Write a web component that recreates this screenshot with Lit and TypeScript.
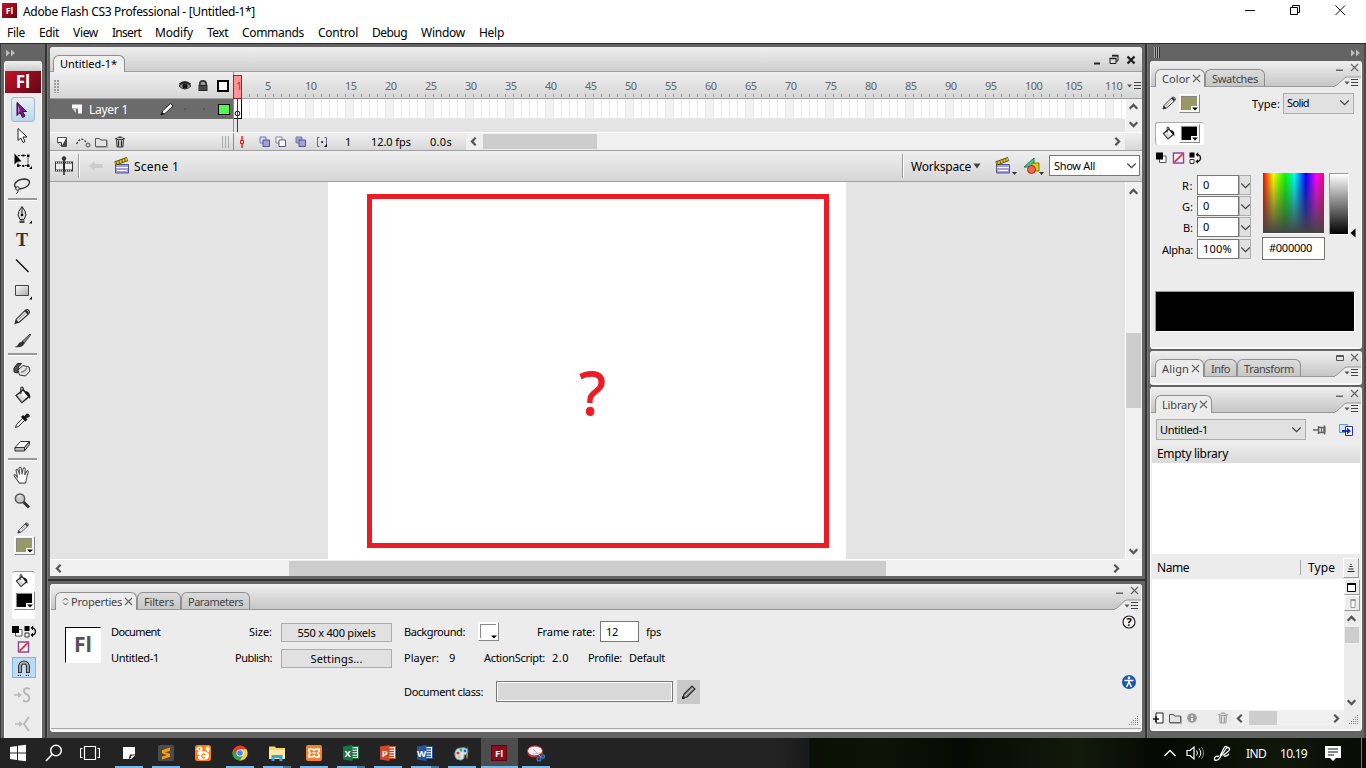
import { LitElement, html, svg, css, TemplateResult } from "lit";
import { customElement, property } from "lit/decorators.js";
import { classMap } from "lit/directives/class-map.js";

/** Label whose tracking is adjusted so that the text fills a given width. */
@customElement("ui-label")
class UiLabel extends LitElement {
  @property({ type: Number }) w = 0;
  @property() text = "";
  static styles = css`
    :host { display: inline-block; white-space: pre; flex: none; }
    span { display: inline-block; }
  `;
  render() { return html`<span>${this.text}</span>`; }
  updated() {
    const span = this.renderRoot.querySelector("span") as HTMLElement;
    span.style.letterSpacing = "0";
    const natural = span.getBoundingClientRect().width;
    span.style.letterSpacing = `${(this.w - natural) / this.text.length}px`;
    this.style.width = `${this.w}px`;
  }
}

const L = (text: string, w: number, cls = "") => html`<ui-label class=${cls} .text=${text} .w=${w}></ui-label>`;
/** SVG box with its origin in the centre. */
const ic = (w: number, h: number, body: unknown) =>
  html`<svg class="ic" width=${w} height=${h} viewBox="${-w / 2} ${-h / 2} ${w} ${h}">${body}</svg>`;

const chev = (dir: "u" | "d" | "l" | "r") => {
  const r = { u: 0, r: 90, d: 180, l: 270 }[dir];
  return ic(15, 15, svg`<path d="M-3.8 2.2 0 -1.6 3.8 2.2" transform="rotate(${r})" fill="none" stroke="#555" stroke-width="2.2"/>`);
};
const thinChev = (c = "#444") => ic(11, 9, svg`<path d="M-4.2 -2 0 2.2 4.2 -2" fill="none" stroke=${c} stroke-width="1.2"/>`);
const corner = svg`<path d="M0 0h3v-3z" fill="#000"/>`;

const pencil = svg`<path d="M-6 6 -5 2.5 3 -5.5q1.5-1 2.8.3t0 2.8L-2.5 5z" fill="#fff" stroke="#333"/><path d="M-6 6 -5 2.5 -2.5 5zM2 -4.5 5 -1.6 6 -3.5 3.5 -6z" fill="#333"/><path d="M-3 3 3 -3" stroke="#999"/>`;
const bucket = svg`<path d="M-5 0 1 -5 6 1 0 6z" fill="#f4f4f4" stroke="#222" stroke-width="1.3"/><path d="M-1 -7v6M-1 -7q2-1.500 2.500 3" fill="none" stroke="#222"/><path d="M2 -4q6 0 5 7l-2-3z" fill="#111"/><path d="M-5 0h5l3 3-3 3z" fill="#bbb" opacity=".5"/>`;
const smallPage = svg`<path d="M-4.500 -4.500h9v9h-5l-4-4z" fill="#fff" stroke="#555"/><path d="M4.500 -4.500v9h-5z" fill="#444"/><path d="M-4.500 .5h4v4" fill="#ddd" stroke="#333"/>`;
const folder = svg`<path d="M-5.500 4.500v-8h4l1 1.500h6v6.500z" fill="#e4e4e4" stroke="#555"/><path d="M-5 5.300h11.300v-7" fill="none" stroke="#999"/>`;
const trash = svg`<path d="M-3.500 -2.500h7l-.6 7.500h-5.800z" fill="#ccc" stroke="#333"/><path d="M-5 -3q5-3 10 0M-1.500 -5h3M-1.500 -1.500v6M1.500 -1.500v6" fill="none" stroke="#333" stroke-width="1.200"/>`;
const clapper = svg`<path d="M-6.500 -1.500h13v8.500h-13z" fill="#a3a1dc" stroke="#55539a"/><path d="M-6 1.500h12M-5 4.500h10" stroke="#fff" stroke-width="1.200"/><path d="M-7 -2.500 5.500 -7" stroke="#4c4708" stroke-width="4"/><path d="M-6.500 -2.700 5.200 -6.900" stroke="#e6cf2a" stroke-width="2.400"/><path d="M-6 -2.900 5 -6.900" stroke="#7a6b04" stroke-width="2.400" stroke-dasharray="1 2"/>`;
const noneIcon = svg`<path d="M-5 -5h10v10h-10z" fill="#fff" stroke="#93409e" stroke-width="1.500"/><path d="M-4 4 4 -4" stroke="#f0343c" stroke-width="1.800"/>`;
const bwIcon = svg`<path d="M-2 -2h6.500v6.500h-6.500z" fill="#fff" stroke="#555"/><path d="M-5.500 -5.500h7v7h-7z" fill="#000"/>`;
const swapIcon = svg`<path d="M-6 -5.500h5v5h-5z"/><path d="M-5.500 1.500h4v4h-4z" fill="#fff" stroke="#333"/><path d="M1 -3.500h1.500q2.500 1 2.500 3.500t-2.500 3.500h-1" fill="none" stroke="#111" stroke-width="1.300"/><path d="M.2 -3.500 2.700 -6v5zM0 3.500 2.500 1.200v4.600z"/>`;
const menuGlyph = ic(16, 10, svg`<path d="M-7 -1.500h5l-2.500 3z" fill="#555"/><path d="M0 -3.500h7M0 -.5h7M0 2.500h7" stroke="#444"/>`);
const flIcon = (s: number, fs: number) => html`<svg class="ic" width=${s} height=${s} viewBox="0 0 16 16"><defs><linearGradient id="fl" x1="0" y1="0" x2="1" y2="1"><stop offset="0" stop-color="#c41228"/><stop offset="1" stop-color="#5e0713"/></linearGradient></defs><rect width="16" height="16" fill="url(#fl)"/><text class="flt" x="8" y="11.500" font-size=${fs} text-anchor="middle">Fl</text></svg>`;
const swatch = (cls: string) => html`<span class="sw ${cls}"><span class="swc"></span><svg class="swm" width="8" height="6" viewBox="0 0 8 6"><path d="M0 0h8v6H0z" fill="#fff"/><path d="M1 1.500h6l-3 3z"/></svg></span>`;
const cross = ic(9, 9, svg`<path d="M-3.500 -3.500 3.500 3.500M3.500 -3.500 -3.500 3.500" stroke="#666" stroke-width="1.200"/>`);

interface Tool { h: number; cls?: string; body?: unknown; mark?: boolean }
const toolset: Tool[] = [
  { h: 25, cls: "sel", body: svg`<path d="M-4 -7v13l3-3 2.500 5 2.500-1.500-2.500-4.500h4z" fill="#7b1c8f" stroke="#2b0838"/><path d="M-3 -4v8l2-3z" fill="#c870da"/>` },
  { h: 26, body: svg`<path d="M-4 -6.500v12l2.800-2.500 2.200 4.500 2-1-2-4.500h4z" fill="#fff" stroke="#222"/>` },
  { h: 25, mark: true, body: svg`<path d="M-4 -5h10v10h-10z" fill="none" stroke="#222" stroke-dasharray="2 1"/><path d="M-7.500 -7v11l3-3h4z"/><path d="M5 -6h2.500v2.500h-2.500zM5 4h2.500v2.500h-2.500zM-5 4h2.500v2.500h-2.500zM.3 -6h2v2h-2zM.3 4.500h2v2h-2z"/>` },
  { h: 25, body: svg`<path d="M-3 3.500q-6-2-4-5.500 3-4.500 10-4.500 6 1 4 5t-10 5" fill="none" stroke="#333" stroke-width="1.500"/><circle cx="-4.500" cy="3" r="1.800" fill="#ddd" stroke="#333"/><path d="M-4 5q1 2-2 3" fill="none" stroke="#333"/>` },
  { h: 4, cls: "line" },
  { h: 26, mark: true, body: svg`<path d="M0 -8.500q-4 5-4 8.500l2 4.500h4l2-4.500q0-3.500-4-8.500z" fill="#ddd" stroke="#222"/><path d="M0 -8v8" stroke="#222"/><circle r="1.300"/><path d="M-2.500 5.500h5v2.500h-5z" fill="#444"/>` },
  { h: 25, body: svg`<text class="tool-t" x="0" y="5.500" text-anchor="middle">T</text>` },
  { h: 25, body: svg`<path d="M-6 -6 6.500 6.500" stroke="#111" stroke-width="1.400"/>` },
  { h: 26, mark: true, body: svg`<defs><linearGradient id="rg" x1="0" y1="0" x2="1" y2="1"><stop offset="0" stop-color="#fff"/><stop offset="1" stop-color="#aaa"/></linearGradient></defs><path d="M-6.500 -5.500h13v10h-13z" fill="url(#rg)" stroke="#444"/>` },
  { h: 25, body: svg`<g transform="scale(1.150)">${pencil}</g>` },
  { h: 24, body: svg`<path d="M8 -7 0 .5 2 2.500 8.500 -6z" fill="#888" stroke="#444"/><path d="M1 0 -3 2q-1 3-4.500 4 7 1.500 10-3.500z" fill="#333"/>` },
  { h: 4, cls: "line" },
  { h: 26, body: svg`<path d="M-8 2v-4l3.500-4.500h4l-3 3.500-1 6z" fill="#555" stroke="#222"/><path d="M-4 0 1 -4.500 7 -3 8 1 3.500 6 -2.500 5z" fill="#e4e4e4" stroke="#333"/><path d="M-1 2q4 0 6-4.500" fill="none" stroke="#888" stroke-width="1.500"/>` },
  { h: 25, body: svg`<g transform="scale(1.150)">${bucket}</g>` },
  { h: 25, body: svg`<path d="M-6.500 7 -5.500 4 1.500 -3 3.500 -1 -3.500 6z" fill="#eee" stroke="#333"/><path d="M0 -4.500 4.500 0M2.500 -2.500 5.500 -5.500" stroke="#111" stroke-width="3"/><path d="M4.500 -7q4 0 3 3.500l-2.500 1-2-2z" fill="#222"/>` },
  { h: 25, body: svg`<path d="M-7 2 -1.500 -4h9L2.500 2z" fill="#fff" stroke="#333"/><path d="M-7 2h9.500v3.500h-9.500zM2.500 2 7.500 -4v3l-5 6.500z" fill="#bbb" stroke="#333"/>` },
  { h: 4, cls: "line" },
  { h: 26, body: svg`<path d="M-2.500 7.500q-1-2-4.500-6-1-2.500 1-1.500l2 2.500-1.500-7q.8-1.800 1.800 0l1.500 4-.5-6q1-1.500 2 0l.8 6 1-5.500q1.200-1.500 1.800 0l-.3 6 1.700-3.500q1.500-1 1.500.8L4 3.500q0 3-1 4z" transform="translate(0 0) scale(1.080)" fill="#fff" stroke="#555"/>` },
  { h: 25, body: svg`<circle cx="-2" cy="-2" r="4.600" fill="#ccc" stroke="#555" stroke-width="1.500"/><path d="M1.500 1.500 7 7" stroke="#333" stroke-width="3"/><path d="M-4 -3q1-2 3-2" stroke="#fff" fill="none"/>` },
];

const channels: [string, number, string, number][] = [["R:", 11, "0", 7], ["G:", 11, "0", 7], ["B:", 10, "0", 7], ["Alpha:", 31, "100%", 29]];
const menus: [string, number][] = [["File", 18], ["Edit", 20], ["View", 25], ["Insert", 29], ["Modify", 38], ["Text", 21], ["Commands", 62], ["Control", 40], ["Debug", 35], ["Window", 44], ["Help", 25]];

const office = (c: string, ch: string) => svg`<path d="M-1 -6.500h8.500v12h-8.500z" fill="#fff" stroke=${c}/><path d="M1 -4h5M1 -1.500h5M1 1h5M1 3.500h5" stroke=${c} stroke-width="1.300"/><path d="M-8 -6.500 1.500 -8v16l-9.500-1.500z" fill=${c}/><text class="off" x="-3.400" y="3.600" text-anchor="middle">${ch}</text>`;
const tasks: { body: unknown; cls: string }[] = [
  { cls: "open", body: svg`<path d="M-6 -6h12v8l-4 4h-8z" fill="#fff"/><path d="M-.5 6.500 1 1.500h5.500z" fill="#222"/><path d="M1.500 6 2.500 2.500h3.500z" fill="#fff"/>` },
  { cls: "open", body: svg`<rect x="-8" y="-8" width="16" height="16" rx="1.500" fill="#4b4b4b"/><path d="M4 -5.500v3.200L-1 -.8 4 .8v3L-4 6.500v-3L1 2 -4 .3v-3z" fill="#ff9a00"/>` },
  { cls: "", body: svg`<rect x="-8" y="-8" width="16" height="16" rx="2.500" fill="#ff7d0e"/><path d="M-7 -3.500q1-3 4-3 3 .5 2.500 3-.5 1.500-2 2 3-1 5 0 4 1.500 3.500 5-1 3.500-6 3.500-5 0-5-2.500 0-2 3-2.500-4 0-4-2l2-2z" fill="#fff"/><path d="M2.500 2a2 2 0 1 0-.5 2.500" fill="none" stroke="#ff7d0e" stroke-width="1.300"/><circle cx="-3.500" cy="-4" r="1" fill="#ff7d0e"/><path d="M3 -3q-1-3 1.500-3.500T6.500 -3 4.500 -1.500" fill="#fff"/>` },
  { cls: "open", body: svg`<circle r="7.500" fill="#e33b2e"/><path d="M-6.500 -3.750A7.500 7.500 0 0 0 0 7.500L3.250 1.900-3.250 1.900z" fill="#2da94f"/><path d="M0 7.500A7.500 7.500 0 0 0 6.500 -3.750H0L3.250 1.900z" fill="#fdd231"/><circle r="3.600" fill="#fff"/><circle r="2.800" fill="#4285f4"/>` },
  { cls: "open multi", body: svg`<path d="M-8 -6.500h6l1 1.500h9v11h-16z" fill="#f7d774"/><path d="M-8 -3h16v9h-16z" fill="#fde9a0"/><path d="M-5.500 8v-6h11v6h-3v-3h-5v3z" fill="#36a7e0"/>` },
  { cls: "open", body: svg`<rect x="-8" y="-8" width="16" height="16" rx="2" fill="#f5822a"/><path d="M-5 -4h3.500L0 -2.500 1.500 -4H5v2.500L3.500 0 5 1.500V4H1.500L0 2.500-1.500 4H-5V1.500L-3.500 0-5 -1.500z" fill="none" stroke="#fff" stroke-width="1.700" stroke-linejoin="round"/><path d="M-1.500 0h3" stroke="#fff" stroke-width="1.500"/>` },
  { cls: "open multi", body: office("#1e7145", "X") },
  { cls: "open", body: office("#d24726", "P") },
  { cls: "open multi", body: office("#2a5699", "W") },
  { cls: "open", body: svg`<path d="M-7 3q-1-8 6-8 7-1 7 4 0 3-4 3 1 5-4 5-4 0-5-4z" fill="#cfe5f3" stroke="#6a9fc4"/><circle cx="-4" cy="0" r="1.600" fill="#e0342b"/><circle cx="-1" cy="-3" r="1.500" fill="#3eab49"/><circle cx="3" cy="-2" r="1.400" fill="#2762c8"/><circle cx="-3" cy="4" r="1.400" fill="#eec423"/><path d="M6 -8v11l-1 4-1-4z" fill="#c77a2c"/>` },
  { cls: "open active", body: svg`<rect x="-7.500" y="-7.500" width="15" height="15" fill="#8a0d1d" stroke="#5c0812"/><text class="flt" x="0" y="3.600" font-size="9.500" text-anchor="middle">Fl</text>` },
  { cls: "open", body: svg`<ellipse cx="-1" cy="-2" rx="7.500" ry="5" fill="#f4f4f4" stroke="#d8303a"/><path d="M-8 0q3 5 9 3l6-3" fill="none" stroke="#c8323c" stroke-width="1.500"/><path d="M-3 -4 5 4M4 0-3 1" stroke="#bbb"/><circle cx="3" cy="6" r="1.800" fill="none" stroke="#2f78c4" stroke-width="1.500"/><circle cx="7" cy="3.500" r="1.500" fill="none" stroke="#2f78c4" stroke-width="1.500"/>` },
];

@customElement("app-root")
class AppRoot extends LitElement {
  static styles = css`
    :host { display: block; width: 1366px; height: 768px; overflow: hidden; font: 11px/15px "Noto Sans", "Open Sans", sans-serif; color: #000; background: #fff; }
    * { box-sizing: border-box; }
    svg, .ic { display: block; flex: none; }
    .flt { font-family: "Open Sans", sans-serif; font-weight: 700; fill: #fff; }
    .tool-t { font: 700 18px "Liberation Serif", serif; fill: #333; }
    .off { font: 700 9.5px "Open Sans", sans-serif; fill: #fff; }
    .row { display: flex; align-items: center; }
    .titlebar { height: 23px; display: grid; grid-template-columns: 21px 1fr auto; align-items: center; padding-left: 2px; font-size: 12px; background: #fff; }
    .titlebar > .ic { margin-bottom: 3px; }
    .menubar { height: 20px; display: flex; align-items: center; gap: 14px; padding: 0 0 1px 7px; font-size: 12px; background: #fff; }
    .winbtns { display: flex; gap: 31px; padding: 0 19px 3px 0; }
    .work { height: 695px; display: grid; grid-template-columns: 45px 3px 1097px 3px 218px; background: #646464; border-top: 1px solid #2b2b2b; }
    .bar { background: #353535; border-right: 1px solid #757575; }
    .toolcol { padding: 0 3px 0 4px; display: flex; flex-direction: column; box-shadow: inset 1px 0 #3c3c3c; }
    .dockhead { height: 17px; display: flex; align-items: center; flex: none; }
    .toolbox { flex: 1; background: #ececec; display: flex; flex-direction: column; border-radius: 3px 3px 0 0; overflow: hidden; border: solid #fff; border-width: 0 1px; width: 38px; }
    .grad { background: linear-gradient(#efefef, #cdcdcd); }
    .tbhead { height: 10px; flex: none; }
    .biglogo { height: 22px; background: linear-gradient(135deg, #c61429, #5b0612); color: #fff; font: 700 17px/21px "Open Sans", sans-serif; text-align: center; margin-bottom: 4px; flex: none; }
    .tool { display: flex; }
    .tool.sel { margin-left: 6px; width: 24px; height: 25px; overflow: hidden; border: 1px solid #9dbcd6; border-radius: 3px; background: linear-gradient(#e9eff4, #bcd7ec); justify-content: center; align-items: center; padding-right: 4px; }
    .rule { height: 4px; padding-top: 0; flex: none; }
    .rule::before { content: ""; display: block; height: 2px; margin: 0 4px 0 3px; background: #999; border-bottom: 1px solid #fff; }
    .strokeblock { margin: 7px 0 0 9px; height: 51px; width: 22px; display: flex; flex-direction: column; align-items: flex-start; flex: none; }
    .fillblock { height: 48px; width: 23px; margin-left: 7px; background: #fff; border-radius: 3px; border-top: 1px solid #999; display: flex; flex-direction: column; align-items: flex-start; flex: none; }
    .fillblock > svg { margin: 0 0 1px 2px; }
    .fillblock .sw { margin-left: 2px; }
    .sw { position: relative; width: 21px; height: 19px; border: 1px solid #fff; border-right-color: #888; border-bottom-color: #888; background: #f4f4f4; display: block; flex: none; padding: 1px; }
    .swc { display: block; height: 14px; width: 16px; border: 1px solid #888; border-right: 0; border-bottom: 0; background: #000; }
    .sw.olive .swc { background: #999966; }
    .sw.white .swc { background: #fff; }
    .swm { position: absolute; right: 0; bottom: 0; }
    .swaps { display: flex; gap: 0; margin: 6px 0 0 6px; }
    .nonebox { margin: 2px 0 3px 12px; }
    .snap { width: 24px; height: 21px; margin-left: 7px; background: #bcdcf5; border: 1px solid #7fb7e4; display: flex; justify-content: center; align-items: center; flex: none; }
    .ghost { margin: 6px 0 0 7px; }

    .center { display: flex; flex-direction: column; padding: 3px 3px 0 2px; width: 1097px; }
    .doc { height: 529px; width: 1092px; background: #e4e4e4; display: flex; flex-direction: column; border-radius: 3px 3px 0 0; overflow: hidden; flex: none; }
    .doc > * { flex: none; }
    .doctabs { height: 25px; display: grid; grid-template-columns: 72px 1fr auto; align-items: end; padding: 0 6px 0 3px; border-bottom: 1px solid #a0a0a0; font-size: 11px; background: linear-gradient(#efefef, #cecece); }
    .doctab { height: 17px; border: 1px solid #8f8f8f; border-bottom: 0; border-radius: 6px 6px 0 0; background: #f0f0f0; padding: 0 0 2px 6px; display: flex; align-items: center; margin-bottom: -1px; }
    .docbtns { display: flex; gap: 7px; align-self: center; padding-top: 2px; }
    .timeline { height: 79px; position: relative; display: flex; flex-direction: column; }
    .trow { display: grid; grid-template-columns: 183px 1px 1fr; flex: none; }
    .rulerrow { height: 27px; background: linear-gradient(#efefef, #d6d6d6); border-bottom: 1px solid #a0a0a0; }
    .rl { display: grid; grid-template-columns: 123px 20px 20px 13px; align-items: center; padding: 2px 0 0 4px; }
    .dots { width: 5px; height: 13px; background: radial-gradient(circle at 1px 1px, #999 .7px, transparent .9px) 0 0 / 3px 3px; }
    .sq { width: 12px; height: 12px; border: 2px solid #000; background: #fff; }
    .ruler { display: grid; grid-template-columns: 24px repeat(21, 40px) 28px 1fr; height: 26px; color: #666; background: repeating-linear-gradient(90deg, transparent 0 7px, #999 7px 8px) 8px 22px / 880px 3px no-repeat; }
    .num { padding-top: 6px; padding-left: 7px; line-height: 15px; white-space: nowrap; }
    .menu { padding-top: 9px; }
    .vline { background: #8e8e8e; }
    .layer { background: #6b6b6b; color: #fff; font-size: 12px; display: grid; grid-template-columns: 18px 71px 24px 2px 17px 2px 13px 12px; align-items: center; padding-left: 21px; }
    .green { width: 12px; height: 11px; border: 1px solid #000; background: #4ffc4f; }
    .layerrow { height: 20px; }
    .dot { width: 2px; height: 2px; border-radius: 1px; background: #555; justify-self: center; }
    .frames { display: grid; grid-template-columns: 8px 880px 1fr; }
    .framegrid { background: repeating-linear-gradient(90deg, transparent 0 7px, #e8e8e8 7px 8px), repeating-linear-gradient(90deg, #fff 0 24px, #f3f3f3 24px 32px, #fff 32px 40px); border-bottom: 1px solid #e8e8e8; }
    .fone { background: #fff; border: 1px solid #000; border-width: 0 1px 1px 0; display: flex; align-items: flex-end; justify-content: center; }
    .fend { background: #fff; margin-right: 17px; }
    .blank { height: 14px; border-bottom: 1px solid #fff; }
    .playhead { position: absolute; left: 183px; top: 3px; width: 9px; height: 24px; background: #ff9494; border: 1px solid #c81414; color: #9c4040; padding: 2px 0 0 2px; line-height: 15px; }
    .playline { position: absolute; left: 187px; top: 27px; width: 1px; height: 33px; background: #c00; }
    .tvscroll { position: absolute; right: 0; top: 27px; width: 17px; height: 33px; background: #f0f0f0; display: flex; flex-direction: column; align-items: flex-start; justify-content: space-between; border-left: 1px solid #fff; }
    .tbar { height: 18px; border-bottom: 1px solid #a0a0a0; background: linear-gradient(#efefef, #d8d8d8); }
    .tl { display: grid; grid-template-columns: 20px 19px 19px 18px 1fr 7px; align-items: center; padding: 0 4px 0 5px; }
    .vgrip { height: 12px; background: repeating-linear-gradient(90deg, #aaa 0 1px, transparent 1px 3px); }
    .tr { display: grid; grid-template-columns: 24px 16px 16px 20px 20px 15px 24px 61px 36px 659px; align-items: center; }
    .hs { display: flex; align-items: center; background: #f0f0f0; }
    .hs i { flex: 1; }
    .thumb { background: #cdcdcd; flex: none; }
    .tr .hs { height: 17px; }
    .tr ui-label { margin-bottom: 1px; }
    .tr .thumb { width: 114px; height: 15px; margin-left: 2px; }
    .edit { height: 31px; border-bottom: 1px solid #a0a0a0; background: linear-gradient(#efefef, #d6d6d6); display: grid; grid-template-columns: 23px 10px 26px 20px 768px 9px 62px 22px 27px 27px 91px; align-items: center; padding-left: 5px; font-size: 12px; }
    .edit .select { margin-bottom: 1px; }
    .vsep { width: 2px; height: 24px; background: #999; border-right: 1px solid #fff; }
    .select { border: 1px solid #adadad; background: #e1e1e1; display: flex; align-items: center; justify-content: space-between; height: 21px; padding: 0 3px 1px; font-size: 11px; }
    .select.white { background: #fff; border-color: #777; padding: 0 2px 1px 4px; }
    .stagearea { height: 377px; display: grid; grid-template-columns: 278px 518px 279px 17px; background: #e4e4e4; }
    .stage { background: #fff; padding: 12px 17px 0 39px; }
    .frame { width: 462px; height: 354px; border: 5px solid #ed1c24; color: #ed1c24; font: 61px/60px "Noto Sans", "Open Sans", sans-serif; -webkit-text-stroke: 1px #ed1c24; text-align: center; padding: 163px 11px 0 0; }
    .vs { background: #f0f0f0; display: flex; flex-direction: column; align-items: flex-start; border-left: 1px solid #fff; padding: 2px 0 0; }
    .stagearea .thumb { width: 15px; height: 75px; margin-top: 134px; }
    .stagearea .vs i { flex: 1; }
    .hscroll { height: 17px; padding: 0 18px 0 1px; border-top: 1px solid #fff; background: #f0f0f0; }
    .hscroll .thumb { width: 597px; height: 15px; margin-left: 223px; }
    .split { height: 8px; padding-top: 3px; flex: none; }
    .split::before { content: ""; display: block; height: 2px; background: #303030; margin: 0 -3px 0 -2px; }

    .panel { background: #ececec; border-radius: 3px; border: solid #f8f8f8; border-width: 0 1px 2px; position: relative; flex: none; overflow: hidden; }
    .strip { height: 26px; border-bottom: 1px solid #999; background: linear-gradient(#f0f0f0, #c6c6c6); display: flex; align-items: flex-end; padding-left: 4px; color: #444; position: relative; }
    .tab { height: 17px; border: 1px solid #8f8f8f; border-bottom: 0; border-radius: 6px 6px 0 0; background: linear-gradient(#dcdcdc, #c6c6c6); display: flex; align-items: center; padding: 0 6px; gap: 2px; }
    .tab.on { background: #ececec; height: 18px; margin-bottom: -1px; padding-right: 3px; }
    .ends { margin-left: auto; height: 26px; display: flex; flex-direction: column; align-items: flex-end; }
    .pbtns { display: flex; gap: 6px; height: 15px; align-items: center; padding-right: 2px; flex: none; }
    .props { height: 148px; width: 1092px; }
    .pbody { display: grid; grid-template-columns: 46px 97px 73px 120px 1fr 20px; padding: 8px 2px 0 14px; height: 119px; border-bottom: 1px solid #aaa; }
    .docicon { width: 36px; height: 36px; border: 1px solid #000; border-right-color: #fff; border-bottom-color: #fff; background: #fff; color: #555; font: 700 21px/33px "Open Sans", sans-serif; text-align: center; margin-top: 9px; }
    .stack { display: flex; flex-direction: column; }
    .stack > * { height: 26px; display: flex; align-items: center; }
    .right { align-items: flex-end; padding-right: 9px; }
    .stack > .btn { height: 19px; width: 111px; border: 1px solid #adadad; background: #e1e1e1; justify-content: center; margin: 5px 0 2px; }
    .stack > .btn + .btn { margin-top: 5px; }
    .details { padding-left: 3px; }
    .details > .l1 { display: grid; grid-template-columns: 74px 59px 63px 46px 20px; }
    .details > .l2 { display: grid; grid-template-columns: 45px 35px 68px 36px 41px 40px; }
    .details > .l3 { display: grid; grid-template-columns: 92px 181px 24px; height: 42px; padding-top: 1px; }
    .field { background: #fff; border: 1px solid #777; height: 21px; display: flex; align-items: center; padding-left: 5px; }
    .l1 .field { width: 39px; }
    .dis { height: 21px; width: 177px; border: 1px solid #777; background: #d8d8d8; box-shadow: inset 0 0 0 1px #fff; }
    .edbtn { width: 23px; height: 24px; background: #c9c9c9; display: flex; align-items: center; justify-content: center; }
    .side { display: flex; flex-direction: column; align-items: center; margin-top: -4px; gap: 44px; }
    .grip { position: absolute; right: 2px; bottom: 4px; }

    .dock { padding: 0 4px 0 2px; display: flex; flex-direction: column; gap: 2px; box-shadow: inset -2px 0 #4a4a4a; width: 218px; }
    .dock .dockhead { justify-content: space-between; padding: 0 1px 0 4px; margin-bottom: -2px; }
    .dgrip { width: 6px; height: 11px; background: repeating-linear-gradient(90deg, #aaa 0 1px, #333 1px 2px); }
    .dock .panel { width: 212px; }
    .color { height: 288px; }
    .colbody { padding: 5px 7px 0 4px; display: flex; flex-direction: column; }
    .c1 { display: grid; grid-template-columns: 24px 73px 31px 71px; align-items: center; height: 22px; }
    .c1 > svg { margin-left: 7px; }
    .c2 { margin-top: 8px; width: 49px; height: 23px; background: #fff; border: 1px solid #aaa; border-width: 1px 0 0 1px; border-radius: 3px; display: flex; align-items: center; gap: 4px; padding: 0 0 1px 5px; }
    .c3 { display: flex; gap: 4px; margin-top: 6px; }
    .c4 { display: grid; grid-template-columns: 108px 61px 5px 20px 6px; margin-top: 8px; height: 87px; }
    .chs { display: grid; gap: 1px; padding-top: 2px; align-content: start; justify-items: end; width: 96px; }
    .ch { display: flex; align-items: center; height: 20px; }
    .ch:last-child { margin-top: 1px; }
    .ch ui-label { margin: 0 4px 0 0; }
    .ch .field { width: 42px; height: 20px; }
    .ch .field ui-label { margin: 0 0 1px; }
    .ch b { width: 12px; height: 20px; font-weight: 400; border: 1px solid #adadad; background: #e1e1e1; display: flex; align-items: center; justify-content: center; }
    .spec { height: 61px; background: linear-gradient(transparent, #444), linear-gradient(90deg, #f00, #ff0 17%, #0f0 36%, #0ff 52%, #00f 70%, #f0f 87%, #f06 100%); border-bottom: 1px solid #fff; }
    .hexcol { display: flex; flex-direction: column; gap: 3px; }
    .hex { width: 63px; height: 23px; margin-left: -1px; padding-left: 6px; padding-bottom: 3px; }
    .lum { height: 62px; background: linear-gradient(#fff, #000); border: 1px solid #999; border-right-color: #fff; border-bottom-color: #fff; }
    .mark { margin-top: 55px; }
    .black { height: 41px; margin: 31px 0 0; background: #000; border: 1px solid #999; border-right-color: #fff; border-bottom-color: #fff; width: 200px; }
    .align { height: 34px; }
    .lib { height: 344px; }
    .l-sel { display: grid; grid-template-columns: 157px 26px 14px; padding: 2px 0 0 5px; align-items: center; height: 31px; }
    .l-sel .select { width: 150px; }
    .lhead { margin: 0 1px; height: 19px; background: linear-gradient(#ececec, #dadada); padding: 0 0 1px 5px; font-size: 12px; }
    .preview { height: 91px; margin: 0 1px; background: #fff; }
    .lcols { display: grid; grid-template-columns: 143px 43px 16px; margin: 2px 0 0 6px; height: 23px; align-items: center; font-size: 12px; }
    .lcols .sep { border-left: 1px solid #aaa; padding-left: 7px; }
    .cell { height: 20px; border: 1px solid #fff; border-right-color: #999; border-bottom-color: #999; display: flex; align-items: center; justify-content: center; }
    .llist { display: grid; grid-template-columns: 192px 15px; height: 131px; margin-left: 1px; }
    .white { background: #fff; }
    .lr { display: flex; flex-direction: column; align-items: center; }
    .lr .cell { width: 16px; height: 16px; }
    .lr .thumb { width: 14px; height: 16px; margin-top: 1px; }
    .lr i { flex: 1; }
    .lfoot { display: grid; grid-template-columns: 16px 17px 31px 16px 112px; align-items: center; height: 16px; margin-left: 1px; }
    .lfoot .thumb { width: 28px; height: 14px; margin-left: 2px; }
    .lfoot .hs { height: 16px; }

    .taskbar { height: 30px; display: flex; background: linear-gradient(90deg, #232323 0 775px, #1b1b1b 800px, #191919 809px, #0b0f05 810px, #0d1307 880px, #070a04 960px, #121a0b 1080px, #060803 1160px, #10170a 1280px, #080b05); color: #fff; font-size: 12px; }
    .tk { width: 36px; display: flex; align-items: center; justify-content: center; }
    .task { width: 37px; display: flex; align-items: center; justify-content: center; position: relative; }
    .task:nth-child(4) { margin-left: 3px; }
    .task.open::after { content: ""; position: absolute; left: 4px; right: 5px; bottom: 0; height: 2px; background: #76b9ed; }
    .task.multi::after { background: linear-gradient(90deg, #76b9ed 0 20px, #4b7697 20px); }
    .task.active { background: #4c4c4c; }
    .task.active::after { left: 0; right: 0; }
    .task svg { margin-right: 1px; }
    .tray { margin: 0 -4px 0 auto; display: grid; grid-template-columns: 23px 27px 33px 34px 44px 36px; width: 202px; align-items: center; }
    .peek { border-right: 1px solid #777; height: 30px; margin-right: 4px; }
  `;

  private strip(tabs: { t: string; tw: number }[], restore = false, lead = false): TemplateResult {
    return html`<div class="strip">
      ${tabs.map((t, i) => html`<div class=${classMap({ tab: true, on: i === 0 })}>
        ${lead && i === 0 ? ic(7, 9, svg`<path d="M-2.500 -1 0 -3.500 2.500 -1M-2.500 1 0 3.500 2.500 1" fill="none" stroke="#666"/>`) : ""}
        ${L(t.t, t.tw)}${i === 0 ? cross : ""}</div>`)}
      <div class="ends"><div class="pbtns">
        ${restore ? ic(8, 8, svg`<path d="M-3.500 -2h7v4.500h-7z" fill="none" stroke="#555"/><path d="M-3.500 -2h7" stroke="#555" stroke-width="2"/>`) : ic(8, 8, svg`<path d="M-4 2.200h7" stroke="#666" stroke-width="1.500"/>`)}
        ${cross}</div>
        <svg width="26" height="12" viewBox="0 0 26 12"><path d="M-1 10.500h2.500l8-7q1.500-1.500 3-1.500H27v11H-1z" fill="#ececec"/><path d="M-1 10.500h2.500l8-7.500q1.500-1 3-1H27" fill="none" stroke="#999"/><path d="M9.500 6.500h5l-2.500 3z" fill="#555"/><path d="M16 4.500h7M16 7.500h7M16 10.500h7" stroke="#444"/></svg>
      </div>
    </div>`;
  }

  private gripDots() {
    const pts: unknown[] = [];
    for (let r = 0; r < 5; r++) for (let c = 4 - r; c < 5; c++) pts.push(svg`<rect x=${c * 2} y=${r * 2} width="1" height="1" fill="#888"/>`);
    return html`<svg class="grip" width="10" height="10">${pts}</svg>`;
  }

  private toolbox() {
    return html`<div class="toolcol">
      <div class="dockhead">${ic(14, 10, svg`<path d="M-5 -3.500v7l4-3.500zM0 -3.500v7l4-3.500z" fill="#bbb"/>`)}</div>
      <div class="toolbox">
        <div class="tbhead grad"></div><div class="biglogo">Fl</div>
        ${toolset.map(t => t.cls === "line" ? html`<div class="rule"></div>`
          : t.cls === "sel" ? html`<div class="tool sel">${ic(22, 23, t.body)}</div>`
          : html`<div class="tool">${ic(34, t.h, svg`${t.body}${t.mark ? svg`<g transform="translate(7 8.500)">${corner}</g>` : ""}`)}</div>`)}
        <div class="strokeblock">${ic(18, 16, svg`<g transform="scale(.85)">${pencil}</g>`)}${swatch("olive")}</div>
        <div class="fillblock">${ic(14, 18, svg`<g transform="scale(.9)">${bucket}</g>`)}${swatch("")}</div>
        <div class="swaps">${ic(13, 13, bwIcon)}${ic(13, 13, swapIcon)}</div>
        <div class="nonebox">${ic(13, 14, noneIcon)}</div>
        <div class="snap">${ic(16, 18, svg`<path d="M-4 5v-6.500a4 4 0 0 1 8 0v6.500" fill="none" stroke="#333" stroke-width="4"/><path d="M-4 4v-5.500a4 4 0 0 1 8 0v5.500" fill="none" stroke="#aaa" stroke-width="1.800"/><path d="M-6 7.500h4M2 7.500h4" stroke="#222" stroke-dasharray="1 1"/>`)}</div>
        <div class="ghost">${ic(22, 22, svg`<path d="M-9 0h6" stroke="#bbb" stroke-width="1.500"/><path d="M-5 -3v6l4-3z" fill="#bbb"/><path d="M7 -6q-6-2-6 2 0 2 3 3.500t2 5-6 1" fill="none" stroke="#bbb" stroke-width="2"/>`)}</div>
        <div class="ghost">${ic(22, 24, svg`<path d="M-8 0h6" stroke="#bbb" stroke-width="1.500"/><path d="M-4 -3v6l4-3z" fill="#bbb"/><path d="M6 -7 1 0 6 7" fill="none" stroke="#bbb" stroke-width="2"/>`)}</div>
      </div></div>`;
  }

  private document() {
    const onion = (a: string, b: string) => ic(14, 14, svg`<path d="M-5 -5h6v6h-6z" fill=${a} stroke="#7b79b5"/><path d="M-2 -2h6.500v6.500h-6.500z" fill=${b} stroke="#55539a"/>`);
    return html`<div class="doc">
      <div class="doctabs"><div class="doctab">${L("Untitled-1*", 57)}</div><span></span>
        <div class="docbtns">${ic(8, 12, svg`<path d="M-4 3.500h6" stroke="#222" stroke-width="2"/>`)}${ic(10, 12, svg`<path d="M-4 -1.500h6v5h-6zM-2 -4h6v5h-2" fill="none" stroke="#222"/><path d="M-4.500 -1.500h7M-2 -4.500h6.500" stroke="#222" stroke-width="1.500"/>`)}${ic(10, 12, svg`<path d="M-3.500 -3.500 3.500 3.500M3.500 -3.500-3.500 3.500" stroke="#222" stroke-width="2.400"/>`)}</div></div>
      <div class="timeline">
        <div class="trow rulerrow">
          <div class="rl"><div class="dots"></div>
            ${ic(16, 14, svg`<path d="M-6 0q6-6 12 0-6 6-12 0z" fill="#999" stroke="#333"/><path d="M-5.500 -1.500q5-5 11 0" fill="none" stroke="#222" stroke-width="1.800"/><circle r="2.600" fill="#111"/>`)}
            ${ic(12, 14, svg`<path d="M-3.200 0v-2a3.200 3.200 0 0 1 6.400 0v2" fill="#999" stroke="#333" stroke-width="1.700"/><path d="M-4.500 -1h9v6h-9z" fill="#222"/><path d="M-4 1h8M-4 3h8" stroke="#666"/>`)}
            <div class="sq"></div></div>
          <div class="vline"></div>
          <div class="ruler">
            <span></span>
            ${Array.from({ length: 22 }, (_, i) => { const s = String((i + 1) * 5); return html`<span class="num">${L(s, s.length * 5.800)}</span>`; })}
            <span class="menu">${menuGlyph}</span></div></div>
        <div class="trow layerrow">
          <div class="layer">${ic(12, 12, svg`<path d="M-5 -4.500h10v9h-4v-5h-6z" fill="#fff"/><path d="M-4 0h3v4z" fill="#ddd"/>`)}${L("Layer 1", 39)}
            ${ic(14, 14, svg`<path d="M-6 6 -4.500 2 3.500 -5.500 6 -3 -2 4.500z" fill="#fff" stroke="#222"/><path d="M-6 6 -5 3 -3 5z"/>`)}
            <div class="dot"></div><div></div><div class="dot"></div><div></div><div class="green"></div></div>
          <div class="vline"></div>
          <div class="frames"><div class="fone">${ic(7, 9, svg`<circle r="2.300" fill="#fff" stroke="#000"/>`)}</div><div class="framegrid"></div><div class="fend"></div></div></div>
        <div class="trow blank"><div></div><div class="vline"></div><div></div></div>
        <div class="trow tbar">
          <div class="tl">${ic(14, 14, smallPage)}${ic(16, 14, svg`<path d="M-6.500 2q5-9 10 -1" fill="none" stroke="#444" stroke-width="1.500" stroke-dasharray="2 1.500"/><circle cx="5" cy="3" r="2" fill="#ccc" stroke="#555"/>`)}${ic(14, 14, folder)}${ic(14, 14, trash)}<i></i><div class="vgrip"></div></div>
          <div class="vline"></div>
          <div class="tr">${ic(16, 14, svg`<path d="M0 -6v12" stroke="#f00" stroke-width="1.300"/><path d="M-1.500 -1.500h3v3h-3z" fill="#fff" stroke="#f00"/>`)}
            ${onion("#d8d8ee", "#a3a1d2")}${onion("#fff", "#fff")}<span class="row">${ic(4, 5, "")}${onion("#a3a1d2", "#a3a1d2")}</span>
            <span class="row">${ic(5, 5, "")}${ic(14, 14, svg`<path d="M-2.500 -4.500h-2v9h2M2.500 -4.500h2v9h-2" fill="none" stroke="#6663a8"/><path d="M-.7 -.7h1.800v1.800h-1.800z"/><path d="M2 5h3v-3z"/>`)}</span>
            <i></i>${L("1", 6)}<span class="row">${ic(2, 5, "")}${L("12.0 fps", 40)}</span>${L("0.0s", 22)}
            <div class="hs">${chev("l")}<div class="thumb"></div><i></i>${chev("r")}</div></div></div>
        <div class="playhead">${L("1", 5)}</div><div class="playline"></div>
        <div class="tvscroll">${chev("u")}${chev("d")}</div>
      </div>
      <div class="edit">
        ${ic(18, 20, svg`<path d="M-9 -4.500h18v10h-18z" fill="#333"/><path d="M-8 -2.500h7v6h-7zM1 -2.500h7v6h-7z" fill="#eee"/><path d="M-8 -3.700h16M-8 4.700h16" stroke="#fff" stroke-dasharray="1 1"/><path d="M0 -9v18" stroke="#222" stroke-width="1.500"/><circle cy="-7.500" r="2.200" fill="#333"/>`)}
        <div class="vsep"></div>${ic(16, 14, svg`<path d="M-7 0 -1.500 -5v3h8v4h-8v3z" fill="#ccc"/>`)}${ic(16, 18, clapper)}${L("Scene 1", 45)}
        <div class="vsep"></div>${L("Workspace", 60)}${ic(8, 8, svg`<path d="M-3.500 -2.500h7l-3.500 5z" fill="#444"/>`)}
        ${ic(22, 20, svg`<g transform="translate(-3 0)">${clapper}</g><path d="M6 6h5l-2.500 3z" fill="#333"/>`)}
        ${ic(22, 20, svg`<path d="M-9 1 1 -8v9z" fill="#48c8a0" stroke="#157c58"/><path d="M-1 -3h7v8h-7z" fill="#d8cc1e" stroke="#817600"/><circle cx="-1.500" cy="3.500" r="4" fill="#f06a4a" stroke="#a82a12"/><path d="M6 6h5l-2.500 3z" fill="#333"/>`)}
        <div class="select white">${L("Show All", 41)}${thinChev()}</div></div>
      <div class="stagearea"><div></div><div class="stage"><div class="frame">?</div></div><div></div>
        <div class="vs">${chev("u")}<div class="thumb"></div><i></i>${chev("d")}</div></div>
      <div class="hs hscroll">${chev("l")}<div class="thumb"></div><i></i>${chev("r")}</div>
    </div>`;
  }

  private properties() {
    return html`<div class="panel props">
      ${this.strip([{ t: "Properties", tw: 51 }, { t: "Filters", tw: 30 }, { t: "Parameters", tw: 55 }], false, true)}
      <div class="pbody"><div class="docicon">Fl</div>
        <div class="stack names"><div>${L("Document", 49)}</div><div>${L("Untitled-1", 48)}</div></div>
        <div class="stack right"><div>${L("Size:", 23)}</div><div>${L("Publish:", 37)}</div></div>
        <div class="stack"><div class="btn">${L("550 x 400 pixels", 78)}</div><div class="btn">${L("Settings...", 52)}</div></div>
        <div class="stack details">
          <div class="l1">${L("Background:", 61)}${swatch("white")}${L("Frame rate:", 58)}<div class="field">${L("12", 12)}</div>${L("fps", 15)}</div>
          <div class="l2">${L("Player:", 35)}${L("9", 7)}${L("ActionScript:", 61)}${L("2.0", 17)}${L("Profile:", 34)}${L("Default", 36)}</div>
          <div class="l3">${L("Document class:", 79)}<div class="dis"></div><div class="edbtn">${ic(20, 18, svg`<path d="M-6 6 -5 2 3 -6 6 -3 -2 5z" fill="#8c8c8c" stroke="#333" stroke-width="1.200"/><path d="M-4 4 4 -4" stroke="#ccc"/><path d="M-7 7v-3l3 3z"/>`)}</div></div></div>
        <div class="side">${ic(16, 16, svg`<circle r="6" fill="#f4f4f4" stroke="#222" stroke-width="1.200"/><text x="0" y="4" font-size="11" font-weight="700" text-anchor="middle">?</text>`)}
          ${ic(16, 16, svg`<circle r="7" fill="#1b57ad"/><circle cy="-4" r="1.400" fill="#fff"/><path d="M-4.500 -1.500h9M0 -2v3M0 0 -2.500 5M0 0 2.500 5" stroke="#fff" stroke-width="1.600"/>`)}</div>
      </div>${this.gripDots()}</div>`;
  }

  private dock() {
    return html`<div class="dock">
      <div class="dockhead"><div class="dgrip"></div>${ic(12, 10, svg`<path d="M-4 -3.500v7l4-3.500zM1 -3.500v7l4-3.500z" fill="#bbb"/>`)}</div>
      <div class="panel color">${this.strip([{ t: "Color", tw: 28 }, { t: "Swatches", tw: 46 }])}
        <div class="colbody">
          <div class="c1">${ic(14, 16, pencil)}${swatch("olive")}${L("Type:", 28)}<div class="select">${L("Solid", 22)}${thinChev()}</div></div>
          <div class="c2">${ic(14, 17, svg`<g transform="scale(.9)">${bucket}</g>`)}${swatch("")}</div>
          <div class="c3">${ic(13, 14, bwIcon)}${ic(13, 14, noneIcon)}${ic(13, 14, swapIcon)}</div>
          <div class="c4"><div class="chs">${channels.map(c => html`<div class="ch">${L(c[0], c[1])}<div class="field">${L(c[2], c[3])}</div><b>${thinChev()}</b></div>`)}</div>
            <div class="hexcol"><div class="spec"></div><div class="field hex">${L("#000000", 43)}</div></div><i></i><div class="lum"></div>
            <div class="mark">${ic(8, 10, svg`<path d="M2.500 -4.500v9l-5-4.500z"/>`)}</div></div>
          <div class="black"></div>
        </div></div>
      <div class="panel align">${this.strip([{ t: "Align", tw: 27 }, { t: "Info", tw: 19 }, { t: "Transform", tw: 50 }], true)}</div>
      <div class="panel lib">${this.strip([{ t: "Library", tw: 35 }])}
        <div class="l-sel"><div class="select">${L("Untitled-1", 48)}${thinChev()}</div>
          ${ic(14, 14, svg`<path d="M-7 0h6" stroke="#666" stroke-width="1.500"/><path d="M-1.500 -4v8M-1 -2.500h5v5h-5M4.500 -4.500v9" fill="#ddd" stroke="#666" stroke-width="1.500"/><path d="M5 -3.500v7M1.500 -2.500v5" stroke="#666"/>`)}
          ${ic(14, 14, svg`<path d="M-6.500 -5.500h8v8h-8z" fill="#cfe6f6" stroke="#69c"/><path d="M-.5 -3.500h7v9h-7z" fill="#fff" stroke="#2234a8"/><path d="M-4 1h6" stroke="#1c2fd0" stroke-width="1.800"/><path d="M1 -2.500v7l4-3.500z" fill="#1c2fd0"/>`)}</div>
        <div class="row lhead">${L("Empty library", 71)}</div>
        <div class="preview"></div>
        <div class="lcols">${L("Name", 32)}<div class="sep">${L("Type", 27)}</div><div class="cell">${ic(10, 10, svg`<path d="M-3.500 3.500h7M-2.500 1h5M-1.500 -1.500h3M-.7 -3.500h1.400" stroke="#222"/>`)}</div></div>
        <div class="llist"><div class="white"></div><div class="lr">
          <div class="cell">${ic(11, 11, svg`<path d="M-4 -4h8v8h-8z" fill="#fff" stroke="#000"/><path d="M-4 -3.500h8" stroke="#000" stroke-width="2"/>`)}</div>
          <div class="cell">${ic(11, 11, svg`<path d="M-.5 -4h4v8h-4z" fill="#fff" stroke="#999"/><path d="M-1 -3.500h5" stroke="#999" stroke-width="2"/>`)}</div>
          ${chev("u")}<div class="thumb"></div><i></i>${chev("d")}</div></div>
        <div class="lfoot">${ic(14, 14, svg`<path d="M-3 -5h7v10h-7z" fill="#fff" stroke="#222"/><path d="M-6 1h6M-3 -2v6" stroke="#111" stroke-width="1.500"/>`)}${ic(14, 14, folder)}
          ${ic(14, 14, svg`<circle r="4.800" fill="#999"/><path d="M0 -2.500v1.500M0 0v3" stroke="#fff" stroke-width="1.500"/>`)}
          ${ic(14, 14, svg`<g opacity=".4">${trash}</g>`)}<div class="hs">${chev("l")}<div class="thumb"></div><i></i>${chev("r")}</div></div>
        ${this.gripDots()}</div></div>`;
  }

  render() {
    return html`
      <div class="titlebar">${flIcon(15, 9.5)}${L("Adobe Flash CS3 Professional - [Untitled-1*]", 232)}
        <div class="winbtns">${ic(14, 14, svg`<path d="M-5 .5h10" stroke="#000"/>`)}${ic(14, 14, svg`<path d="M-4.500 -2.500h7v7h-7zM-2.500 -2.500v-2h7v7h-2" fill="none" stroke="#000"/>`)}${ic(14, 14, svg`<path d="M-4.500 -4.500 5 5M5 -4.500-4.500 5" stroke="#000"/>`)}</div></div>
      <div class="menubar">${menus.map(m => L(m[0], m[1]))}</div>
      <div class="work">${this.toolbox()}<div class="bar"></div>
        <div class="center">${this.document()}<div class="split"></div>${this.properties()}</div>
        <div class="bar"></div>${this.dock()}</div>
      <div class="taskbar">
        <div class="tk">${ic(18, 18, svg`<path d="M-8 -6 -1 -7v6.500h-7zM0 -7.200 8 -8.300v7.800H0zM-8 .5h7v6.500l-7-1zM0 .5h8v7.800l-8-1.100z" fill="#fff"/>`)}</div>
        <div class="tk">${ic(20, 20, svg`<circle cx="2" cy="-2.500" r="5.300" fill="none" stroke="#fff" stroke-width="1.500"/><path d="M-2 1.500-8 8" stroke="#fff" stroke-width="1.500"/>`)}</div>
        <div class="tk">${ic(20, 18, svg`<path d="M-5.500 -6.500h11v13h-11zM-7.500 -4.500h-2v9h2M7.500 -4.500h2v9h-2" fill="none" stroke="#fff" stroke-width="1.200"/>`)}</div>
        ${tasks.map(t => html`<div class="task ${t.cls}">${ic(18, 18, t.body)}</div>`)}
        <div class="tray">
          ${ic(14, 14, svg`<path d="M-5.500 3 0 -2.500 5.500 3" fill="none" stroke="#fff" stroke-width="1.300"/>`)}
          ${ic(18, 16, svg`<path d="M-8 -2.500h3l4-3.500v12l-4-3.500h-3z" fill="none" stroke="#fff" stroke-width="1.200"/><path d="M1.500 -2.500q2 2.500 0 5M4 -4.500q3.500 4.500 0 9" fill="none" stroke="#fff"/><path d="M6.500 -6q4 6 0 12" fill="none" stroke="#888"/>`)}
          ${ic(18, 18, svg`<path d="M-3 3.500q-4-1-4.500 2t4 1l7-10q2-3 3.500-1.500t-1 3.500l-5 4M-2 3 2 -5q1.500-2.500 3-1M2 3q2 1 5-2" fill="none" stroke="#fff" stroke-width="1.300"/>`)}
          <span>${L("IND", 20)}</span><span>${L("10.19", 27)}</span>
          ${ic(18, 18, svg`<path d="M-8 -7h16v12h-5l-3 3-3-3h-5z" fill="#fff"/><path d="M-5 -4h10M-5 -1h10M-5 2h6" stroke="#111" stroke-width="1.200"/>`)}</div>
        <div class="peek"></div></div>`;
  }
}
